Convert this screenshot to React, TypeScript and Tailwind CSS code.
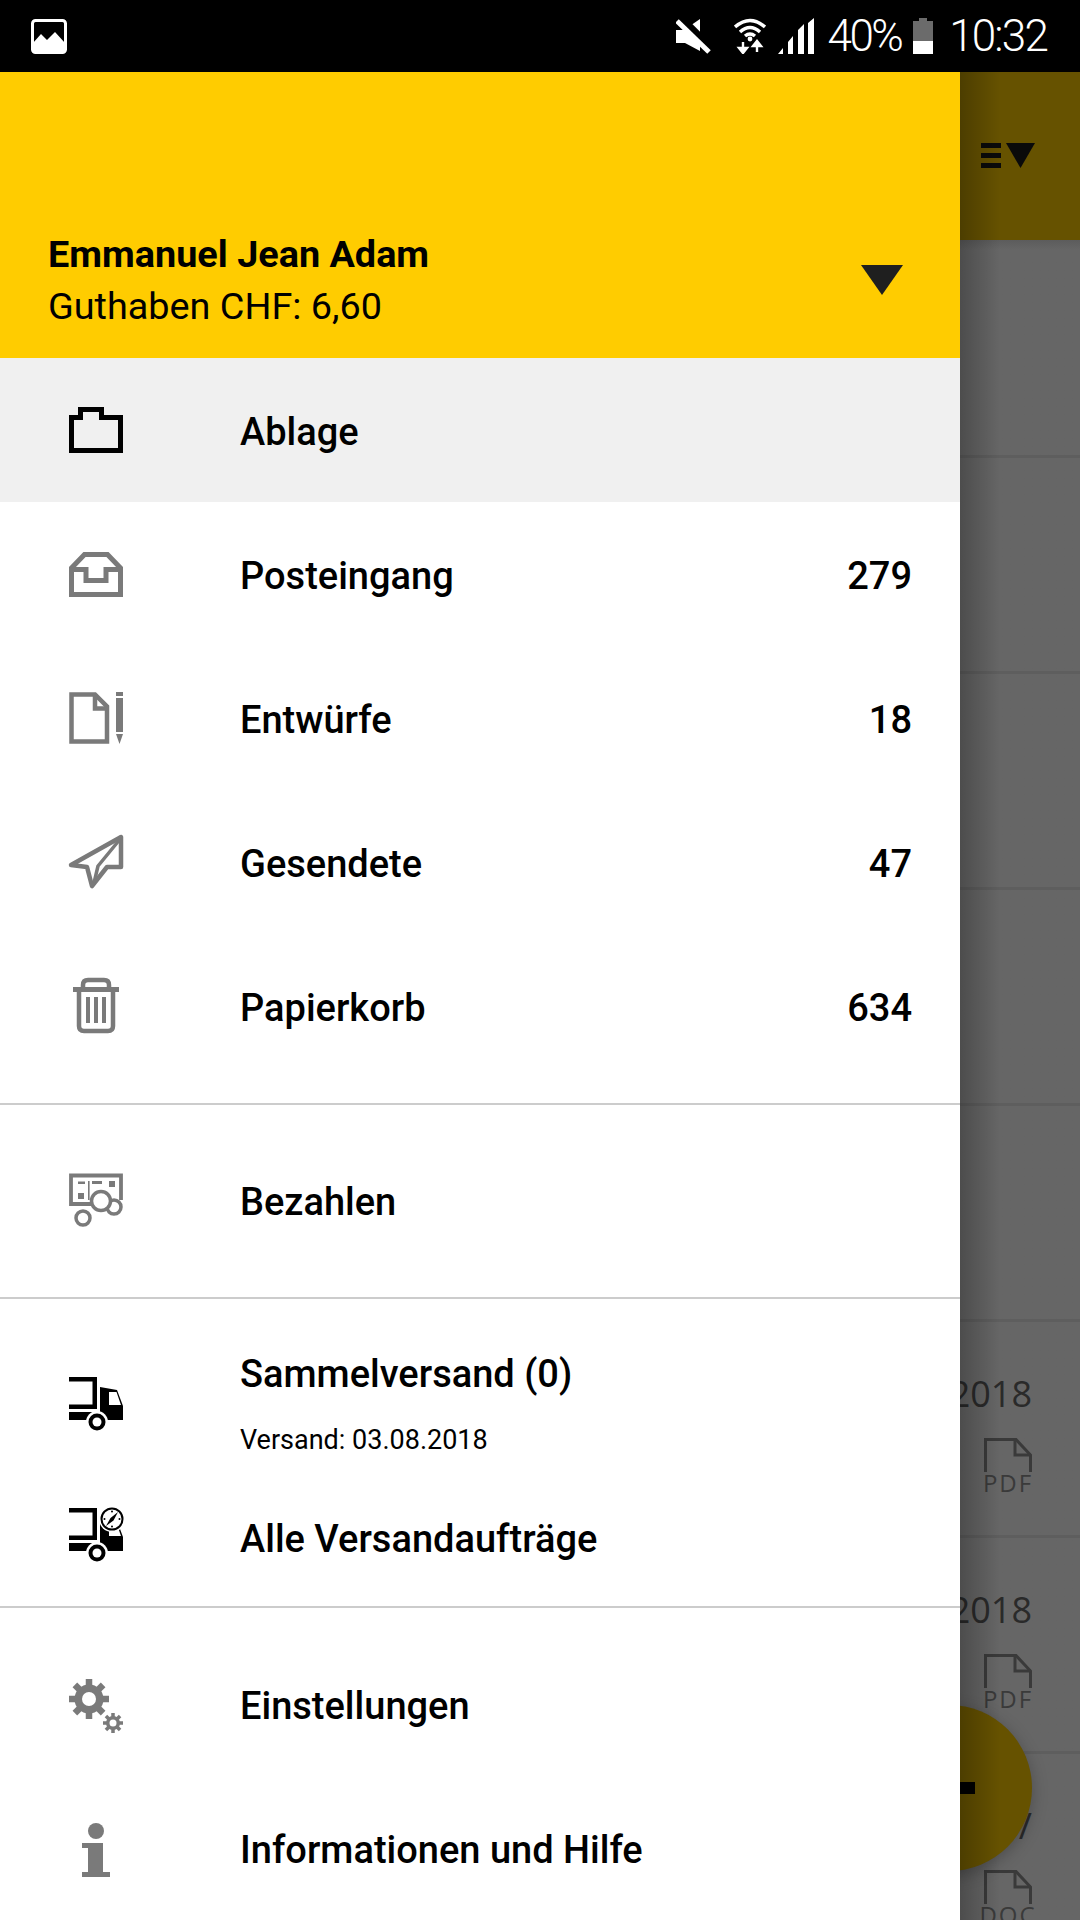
import React from "react";

const G = "#7a7a7a";

function Gear({ cx, cy, r, body, hole, tw, fill = G }: { cx: number; cy: number; r: number; body: number; hole: number; tw: number; fill?: string }) {
  return (
    <g>
      {[0, 45, 90, 135, 180, 225, 270, 315].map((a) => (
        <rect key={a} x={cx - tw / 2} y={cy - r} width={tw} height={r - body + 2} fill={fill} transform={`rotate(${a} ${cx} ${cy})`} />
      ))}
      <circle cx={cx} cy={cy} r={body} fill={fill} />
      <circle cx={cx} cy={cy} r={hole} fill="#fff" />
    </g>
  );
}

const svg = "block w-[54px] h-[54px] overflow-visible shrink-0";

function IconFolder() {
  return (
    <svg className={svg} viewBox="0 0 54 54">
      <path d="M2.5 47.5V14.5H11.5V6.5H32.5V14.5H51.5V47.5Z" fill="none" stroke="#000" strokeWidth="5" />
    </svg>
  );
}
function IconInbox() {
  return (
    <svg className={svg} viewBox="0 0 54 54">
      <path d="M2.5 21L15.5 7.5H38.5L51.5 21V47.5H2.5Z" fill="none" stroke={G} strokeWidth="5" />
      <path d="M2.5 22.5H17V33.5H37V22.5H51.5" fill="none" stroke={G} strokeWidth="5" />
    </svg>
  );
}
function IconDraft() {
  return (
    <svg className={svg} viewBox="0 0 54 54">
      <path d="M2.5 3.5H26L38 15.5V50.5H2.5Z" fill="none" stroke={G} strokeWidth="4.5" />
      <path d="M26 3.5V17.5H38" fill="none" stroke={G} strokeWidth="4.5" />
      <path d="M47 1H54V5H47ZM47 7H54V41H47ZM47 43H54L50.5 53Z" fill={G} />
    </svg>
  );
}
function IconSend() {
  return (
    <svg className={svg} viewBox="0 0 54 54">
      <path d="M2 30L52 2V32H38L23 51L18 32Z" fill="none" stroke={G} strokeWidth="4.5" strokeLinejoin="round" />
      <path d="M52 3L29 31L25 48" fill="none" stroke={G} strokeWidth="3.5" strokeLinejoin="round" />
    </svg>
  );
}
function IconTrash() {
  return (
    <svg className={svg} viewBox="0 0 54 54">
      <path d="M14 10V6Q14 1 19 1H35Q40 1 40 6V10" fill="none" stroke={G} strokeWidth="4.5" />
      <rect x="4" y="8" width="46" height="5" fill={G} />
      <path d="M10 10V47Q10 52 15 52H39Q44 52 44 47V10" fill="none" stroke={G} strokeWidth="4.5" />
      <path d="M17 18H21V44H17ZM25 18H29V44H25ZM33 18H37V44H33Z" fill={G} />
    </svg>
  );
}
function IconPay() {
  return (
    <svg className={svg} viewBox="0 0 54 54">
      <path d="M22 30H2V1.5H52V26" fill="none" stroke={G} strokeWidth="3.8" />
      <path d="M9 7.5H16V10H9ZM23 7H33V10H23ZM40 7H46V13H40ZM9 19H15V25H9Z" fill={G} />
      <rect x="19" y="7" width="1.6" height="19" fill={G} />
      <circle cx="45" cy="33" r="7" fill="#fff" stroke={G} strokeWidth="3.5" />
      <circle cx="32" cy="27" r="9.5" fill="#fff" stroke={G} strokeWidth="3.5" />
      <circle cx="14" cy="44" r="7" fill="#fff" stroke={G} strokeWidth="3.5" />
    </svg>
  );
}
function TruckBody() {
  return (
    <>
      <path d="M0 0H28V32H0V27.5H23.5V4.5H0Z" fill="#000" />
      <path d="M0 35H28V43H0Z" fill="#000" />
      <path d="M31 10L48 13L54 29V43H31Z" fill="#000" />
      <path d="M40 15H47.5L52 28H40Z" fill="#fff" />
      <circle cx="28" cy="45" r="11" fill="#fff" />
      <circle cx="28" cy="45" r="8.5" fill="#000" />
      <circle cx="28" cy="45" r="4.5" fill="#fff" />
    </>
  );
}
function IconTruck() {
  return (
    <svg className={svg} viewBox="0 0 54 54">
      <TruckBody />
    </svg>
  );
}
function IconTruckClock() {
  return (
    <svg className={svg} viewBox="0 0 54 54">
      <TruckBody />
      <circle cx="43" cy="11" r="13" fill="#fff" />
      <circle cx="43" cy="11" r="10.5" fill="#fff" stroke="#000" strokeWidth="2" />
      <path d="M49 4L44.5 12.5L41.5 10ZM37 18L41.5 10L44.5 12.5Z" fill="#000" />
      <circle cx="43" cy="3.5" r="1" fill="#000" />
      <circle cx="35.5" cy="11" r="1" fill="#000" />
      <circle cx="50.5" cy="11" r="1" fill="#000" />
      <circle cx="43" cy="18.5" r="1" fill="#000" />
    </svg>
  );
}
function IconGears() {
  return (
    <svg className={svg} viewBox="0 0 54 54">
      <Gear cx={20} cy={20} r={20} body={14.5} hole={7} tw={6.5} />
      <Gear cx={44} cy={44} r={10} body={7} hole={3.5} tw={3.5} />
    </svg>
  );
}
function IconInfo() {
  return (
    <svg className={svg} viewBox="0 0 54 54">
      <circle cx="27" cy="8" r="8" fill={G} />
      <path d="M13 20H34V49H41V54H13V49H19V25H13Z" fill={G} />
    </svg>
  );
}

function Row({ icon, label, count, active, low }: { icon: React.ReactNode; label: string; count?: string; active?: boolean; low?: boolean }) {
  return (
    <div className={`h-[144px] shrink-0 flex items-center pl-[69px] pr-[48px] text-[38px] font-medium text-black ${active ? "bg-[#f0f0f0]" : ""}`}>
      {icon}
      <span className={`ml-[117px] flex-1 ${low ? "pt-[5px]" : ""}`}>{label}</span>
      {count && <span className={low ? "pt-[5px]" : ""}>{count}</span>}
    </div>
  );
}

function DocIcon({ label }: { label: string }) {
  return (
    <div className="w-[48px] mt-[20px] flex flex-col items-center">
      <svg className="block w-[48px] h-[34px] overflow-visible" viewBox="0 0 48 34">
        <path d="M1.5 34V1.5H32L46.5 17V34" fill="none" stroke="#3a3a3a" strokeWidth="3" />
        <path d="M31 1.5V17H46.5" fill="none" stroke="#3a3a3a" strokeWidth="3" />
      </svg>
      <span className="text-[24px] leading-[18px] mt-[2px] tracking-[2px] text-[#3a3a3a] font-['Open_Sans',sans-serif]">{label}</span>
    </div>
  );
}

function Strip({ date, doc, last }: { date: string; doc: string; last?: boolean }) {
  return (
    <div className={`h-[216px] shrink-0 flex flex-col items-end pt-[48px] pr-[48px] ${last ? "" : "border-b-[3px] border-[#5e5e5e]"}`}>
      <span className="text-[36px] leading-[48px] text-[#2a2a2a] font-['Open_Sans',sans-serif] whitespace-nowrap">{date}</span>
      <DocIcon label={doc} />
    </div>
  );
}

export default function App() {
  return (
    <div className="w-[1080px] h-[1920px] overflow-hidden flex flex-col bg-black font-['Roboto',sans-serif]">
      {/* status bar */}
      <div className="h-[72px] shrink-0 bg-black flex items-center pl-[31px] pr-[33px] text-white">
        <svg className="block w-[36px] h-[35px]" viewBox="0 0 36 35">
          <rect x="1.5" y="1.5" width="33" height="32" rx="3" fill="none" stroke="#fff" strokeWidth="3" />
          <path d="M2 30V24L10 15L16 21L24 13L34 24V33H2Z" fill="#fff" />
        </svg>
        <svg className="block ml-auto w-[36px] h-[36px]" viewBox="0 0 36 36">
          <path d="M0 12H8L24 1V33L9 25H0Z" fill="#fff" />
          <path d="M4 0L36 32" stroke="#000" strokeWidth="9" />
          <path d="M1 3L33 34" stroke="#fff" strokeWidth="5" />
          <path d="M0 12H9L17 23H0Z" fill="#fff" />
        </svg>
        <svg className="block ml-[22px] w-[32px] h-[36px]" viewBox="0 0 32 36">
          <path d="M1 9Q16 -4 31 9M6 14Q16 5 26 14M11 18Q16 14 21 18" fill="none" stroke="#fff" strokeWidth="3.5" />
          <circle cx="16" cy="21" r="2.4" fill="#fff" />
          <path d="M9 24V32M5 30L9 35L13 30Z M23 34V26M19 28L23 23L27 28Z" fill="#fff" stroke="#fff" strokeWidth="2.4" />
        </svg>
        <svg className="block ml-[12px] w-[36px] h-[36px]" viewBox="0 0 36 36">
          <path d="M0 36L5 30V36ZM10 36V24L15 18V36ZM20 36V12L26 6V36ZM30 36V5L36 0V36Z" fill="#fff" />
        </svg>
        <span className="ml-[14px] text-[44px] leading-none tracking-[-2.6px] font-light">40%</span>
        <svg className="block ml-[12px] w-[20px] h-[36px]" viewBox="0 0 20 36">
          <path d="M6 0H14V3H20V23H0V3H6Z" fill="#6b6b6b" />
          <rect x="0" y="23" width="20" height="13" fill="#fff" />
        </svg>
        <span className="ml-[16px] text-[44px] leading-none tracking-[-1.8px] font-light">10:32</span>
      </div>

      <div className="flex-1 flex overflow-hidden">
        {/* drawer */}
        <div className="w-[960px] shrink-0 bg-white flex flex-col relative z-10">
          <div className="h-[286px] shrink-0 bg-[#ffcc00] flex items-end justify-between pl-[48px] pr-[57px] text-black text-[37.8px]">
            <div className="pb-[26px]">
              <div className="font-bold leading-[50px] -translate-y-px">Emmanuel Jean Adam</div>
              <div className="leading-[52px]">Guthaben CHF: 6,60</div>
            </div>
            <svg className="block w-[42px] h-[30px] mb-[63px]" viewBox="0 0 42 30">
              <path d="M0 0H42L21 30Z" fill="#1f1f1f" />
            </svg>
          </div>
          <Row low active icon={<IconFolder />} label="Ablage" />
          <Row low icon={<IconInbox />} label="Posteingang" count="279" />
          <Row low icon={<IconDraft />} label="Entwürfe" count="18" />
          <Row low icon={<IconSend />} label="Gesendete" count="47" />
          <Row low icon={<IconTrash />} label="Papierkorb" count="634" />
          <div className="h-[25px] shrink-0" />
          <div className="h-[2px] shrink-0 bg-[#cccccc]" />
          <div className="h-[192px] shrink-0 flex items-center pl-[69px] text-[38px] font-medium text-black">
            <IconPay />
            <span className="ml-[117px] pt-[3px]">Bezahlen</span>
          </div>
          <div className="h-[2px] shrink-0 bg-[#cccccc]" />
          <div className="h-[307px] shrink-0 flex flex-col pl-[69px] pt-[50px] text-black">
            <div className="h-[110px] shrink-0 flex items-center">
              <IconTruck />
              <div className="ml-[117px] pt-[6px]">
                <div className="text-[38px] font-medium leading-[48px]">Sammelversand (0)</div>
                <div className="text-[27px] leading-[48px] mt-[18px]">Versand: 03.08.2018</div>
              </div>
            </div>
            <div className="h-[116px] mt-[21px] shrink-0 flex items-center">
              <div className="mb-[6px]">
                <IconTruckClock />
              </div>
              <span className="ml-[117px] pt-[2px] text-[38px] font-medium">Alle Versandaufträge</span>
            </div>
          </div>
          <div className="h-[2px] shrink-0 bg-[#cccccc]" />
          <div className="h-[26px] shrink-0" />
          <Row icon={<IconGears />} label="Einstellungen" />
          <Row icon={<IconInfo />} label="Informationen und Hilfe" />
        </div>

        {/* dimmed page behind the drawer */}
        <div className="flex-1 relative bg-[#666666] flex flex-col overflow-hidden">
          <div className="h-[168px] shrink-0 bg-[#665200] flex items-start pt-[71px] pl-[21px] gap-[5px]">
            <div className="w-[20px] h-[25px] flex flex-col justify-between">
              <div className="h-[5px] bg-[#0a0a0a]" />
              <div className="h-[5px] bg-[#0a0a0a]" />
              <div className="h-[5px] bg-[#0a0a0a]" />
            </div>
            <svg className="block w-[29px] h-[25px]" viewBox="0 0 29 25">
              <path d="M0 0H29L14.5 25Z" fill="#0a0a0a" />
            </svg>
          </div>
          <div className="flex-1 overflow-hidden flex flex-col bg-gradient-to-b from-[#5c5c5c] to-[#666666] to-[10px]">
            <div className="h-[218px] shrink-0 border-b-[3px] border-[#5e5e5e]" />
            <div className="h-[216px] shrink-0 border-b-[3px] border-[#5e5e5e]" />
            <div className="h-[216px] shrink-0 border-b-[3px] border-[#5e5e5e]" />
            <div className="h-[216px] shrink-0 border-b-[3px] border-[#5e5e5e]" />
            <div className="h-[216px] shrink-0 border-b-[3px] border-[#5e5e5e]" />
            <Strip date="2018" doc="PDF" />
            <Strip date="2018" doc="PDF" />
            <Strip date="/" doc="DOC" last />
          </div>
          <div className="absolute left-[-94px] top-[1633px] w-[166px] h-[166px] rounded-full bg-[#665200] shadow-[0_4px_16px_rgba(0,0,0,0.25)]">
            <div className="absolute left-[94px] top-[77px] w-[15px] h-[12px] bg-black" />
          </div>
          <div className="absolute inset-y-0 left-0 w-[40px] bg-gradient-to-r from-black/25 to-transparent" />
        </div>
      </div>
    </div>
  );
}
